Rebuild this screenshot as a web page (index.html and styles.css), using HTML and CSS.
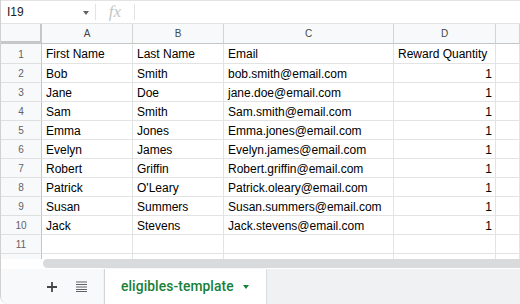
FILE: index.html
```html
<!DOCTYPE html>
<html lang="en">
<head>
    <meta charset="UTF-8">
    <title>eligibles-template</title>
    <link rel="stylesheet" href="styles.css">
</head>
<body>
    <div class="app">
        <div class="formula-bar">
            <div class="name-box">
                <span>I19</span>
                <span class="caret"></span>
            </div>
            <div class="sep"></div>
            <div class="fx">fx</div>
            <div class="sep"></div>
        </div>

        <div class="sheet">
            <div class="corner"></div>
            <div class="col-head">A</div>
            <div class="col-head">B</div>
            <div class="col-head">C</div>
            <div class="col-head">D</div>
            <div class="col-head"></div>

            <div class="row-num first">1</div>
            <div class="cell first">First Name</div>
            <div class="cell first">Last Name</div>
            <div class="cell first">Email</div>
            <div class="cell first">Reward Quantity</div>
            <div class="cell first"></div>

            <div class="row-num">2</div>
            <div class="cell">Bob</div>
            <div class="cell">Smith</div>
            <div class="cell">bob.smith@email.com</div>
            <div class="cell num">1</div>
            <div class="cell"></div>

            <div class="row-num">3</div>
            <div class="cell">Jane</div>
            <div class="cell">Doe</div>
            <div class="cell">jane.doe@email.com</div>
            <div class="cell num">1</div>
            <div class="cell"></div>

            <div class="row-num">4</div>
            <div class="cell">Sam</div>
            <div class="cell">Smith</div>
            <div class="cell">Sam.smith@email.com</div>
            <div class="cell num">1</div>
            <div class="cell"></div>

            <div class="row-num">5</div>
            <div class="cell">Emma</div>
            <div class="cell">Jones</div>
            <div class="cell">Emma.jones@email.com</div>
            <div class="cell num">1</div>
            <div class="cell"></div>

            <div class="row-num">6</div>
            <div class="cell">Evelyn</div>
            <div class="cell">James</div>
            <div class="cell">Evelyn.james@email.com</div>
            <div class="cell num">1</div>
            <div class="cell"></div>

            <div class="row-num">7</div>
            <div class="cell">Robert</div>
            <div class="cell">Griffin</div>
            <div class="cell">Robert.griffin@email.com</div>
            <div class="cell num">1</div>
            <div class="cell"></div>

            <div class="row-num">8</div>
            <div class="cell">Patrick</div>
            <div class="cell">O'Leary</div>
            <div class="cell">Patrick.oleary@email.com</div>
            <div class="cell num">1</div>
            <div class="cell"></div>

            <div class="row-num">9</div>
            <div class="cell">Susan</div>
            <div class="cell">Summers</div>
            <div class="cell">Susan.summers@email.com</div>
            <div class="cell num">1</div>
            <div class="cell"></div>

            <div class="row-num">10</div>
            <div class="cell">Jack</div>
            <div class="cell">Stevens</div>
            <div class="cell">Jack.stevens@email.com</div>
            <div class="cell num">1</div>
            <div class="cell"></div>

            <div class="row-num">11</div>
            <div class="cell"></div>
            <div class="cell"></div>
            <div class="cell"></div>
            <div class="cell"></div>
            <div class="cell"></div>

            <div class="row-num"></div>
            <div class="cell"></div>
            <div class="cell"></div>
            <div class="cell"></div>
            <div class="cell"></div>
            <div class="cell"></div>
        </div>

        <div class="hscroll">
            <div class="hscroll-gap"></div>
            <div class="thumb"></div>
        </div>

        <div class="tab-bar">
            <div class="tab-tools">
                <svg width="12" height="12" viewBox="0 0 12 12">
                    <path d="M6 1v10M1 6h10" stroke="#444746" stroke-width="1.8"/>
                </svg>
                <svg width="11" height="11" viewBox="0 0 11 11">
                    <path d="M0 1h11M0 3.5h11M0 6h11M0 8.5h11M0 10.5h11" stroke="#5f6368" stroke-width="1.1"/>
                </svg>
            </div>
            <div class="tab active">
                <span>eligibles-template</span>
                <span class="tab-caret"></span>
            </div>
        </div>
    </div>
</body>
</html>
```

FILE: styles.css
```css
body {
    margin: 0;
    font-family: "Liberation Sans", Arial, sans-serif;
    background-color: white;
}

.app {
    width: 520px;
    height: 304px;
    display: flex;
    flex-direction: column;
    overflow: hidden;
    border-left: 1px solid #d0d0d0;
    box-sizing: border-box;
    border-bottom-left-radius: 8px;
}

/* formula bar */
.formula-bar {
    height: 24px;
    flex: none;
    display: flex;
    align-items: center;
    border-top: 1px solid #e3e3e3;
    border-bottom: 1px solid #e3e3e3;
    box-sizing: border-box;
}

.name-box {
    width: 94px;
    display: flex;
    align-items: center;
    justify-content: space-between;
    padding: 0 6px 0 6px;
    box-sizing: border-box;
    font-size: 12px;
    color: #202124;
}

.caret {
    width: 0;
    height: 0;
    border-left: 3.5px solid transparent;
    border-right: 3.5px solid transparent;
    border-top: 4px solid #5f6368;
    margin-top: 2px;
}

.sep {
    width: 1px;
    height: 16px;
    background-color: #e3e3e3;
}

.fx {
    width: 38px;
    text-align: center;
    font-family: "Liberation Serif", serif;
    font-style: italic;
    font-size: 17px;
    color: #c4c7c5;
    line-height: 20px;
}

/* grid */
.sheet {
    flex: none;
    height: 235px;
    display: grid;
    grid-template-columns: 41px 91px 91px 170px 102px 1fr;
    grid-template-rows: 20px 20px repeat(10, 19px) 19px;
    overflow: hidden;
    font-size: 12px;
}

.corner,
.col-head,
.row-num,
.cell {
    box-sizing: border-box;
    border-right: 1px solid #e2e3e3;
    border-bottom: 1px solid #e2e3e3;
    white-space: nowrap;
    overflow: hidden;
}

.corner {
    width: 42px;
    background-color: #f8f9fa;
    border-right: 3px solid #c7c7c7;
    border-bottom: 3px solid #c7c7c7;
}

.col-head {
    background-color: #f8f9fa;
    border-right-color: #d3d3d3;
    border-bottom: 1px solid #c7c7c7;
    text-align: center;
    font-size: 10px;
    color: #444746;
    line-height: 19px;
}

.row-num {
    background-color: #f8f9fa;
    border-right-color: #c7c7c7;
    border-bottom-color: #e0e0e0;
    text-align: center;
    font-size: 10px;
    color: #5f6368;
    line-height: 20px;
}

.cell {
    padding: 0 3px 0 4px;
    line-height: 20px;
    color: #000;
}

.cell.first,
.row-num.first {
    line-height: 21px;
}

.cell.num {
    text-align: right;
}

/* scrollbar */
.hscroll {
    flex: none;
    height: 10px;
    display: flex;
    border-bottom: 1px solid white;
    box-sizing: border-box;
}

.hscroll-gap {
    width: 42px;
}

.thumb {
    flex: 1;
    background-color: #d9dadc;
    border-radius: 5px 0 0 5px;
}

/* sheet tabs */
.tab-bar {
    flex: 1;
    display: flex;
    background-color: #eff1f2;
}

.tab-tools {
    width: 104px;
    display: flex;
    align-items: center;
    gap: 18px;
    padding-left: 45px;
    box-sizing: border-box;
    background-color: #f8f9fa;
}

.tab {
    width: 161px;
    display: flex;
    align-items: center;
    padding-left: 16px;
    padding-bottom: 1px;
    box-sizing: border-box;
    background-color: white;
    box-shadow: -1px 0 1px rgba(0, 0, 0, 0.15), 1px 0 1px rgba(0, 0, 0, 0.08);
    font-family: Roboto, "Liberation Sans", sans-serif;
    font-weight: 500;
    font-size: 13.8px;
    color: #188038;
    letter-spacing: 0.1px;
}

.tab-caret {
    width: 0;
    height: 0;
    margin-left: 9px;
    margin-top: 1px;
    border-left: 3.5px solid transparent;
    border-right: 3.5px solid transparent;
    border-top: 4px solid #188038;
}
```
